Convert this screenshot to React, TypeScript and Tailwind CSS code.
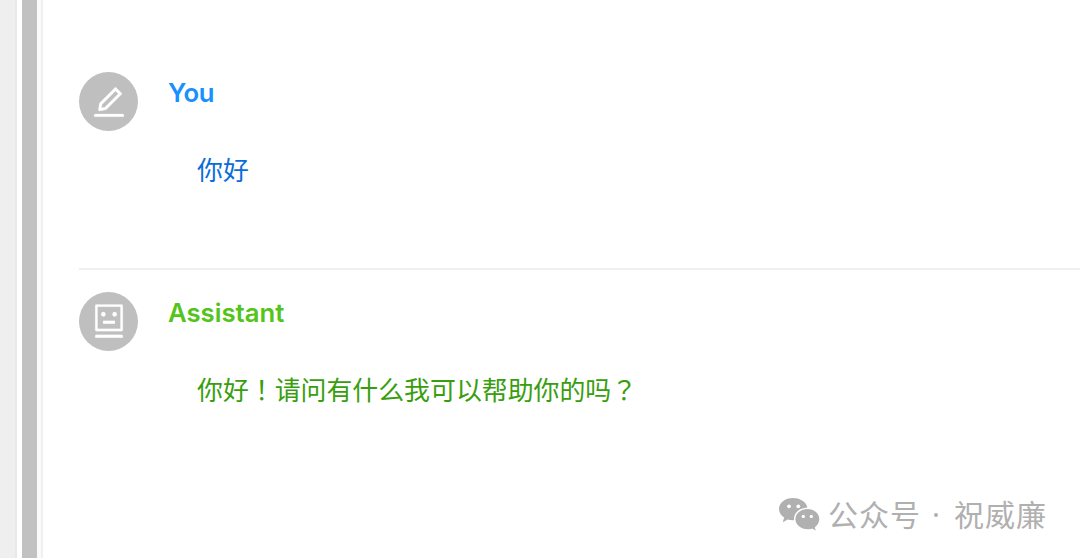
import React from "react";
import { AiOutlineEdit, AiOutlineRobot } from "react-icons/ai";

type MessageProps = {
  name: string;
  text: React.ReactNode;
  nameClass: string;
  textClass: string;
  icon: React.ReactNode;
};

function Message({ name, text, nameClass, textClass, icon }: MessageProps) {
  return (
    <section className="flex pt-[22px]">
      <div className="flex size-[59px] shrink-0 items-center justify-center rounded-full bg-[#bfbfbf] text-white">{icon}</div>
      <div className="ml-[30px]">
        <h2 className={`text-[25.7px] font-semibold leading-[42px] ${nameClass}`}>{name}</h2>
        <p className={`ml-[29px] mt-[36px] text-[25.9px] leading-[42px] ${textClass}`}>{text}</p>
      </div>
    </section>
  );
}

// Full-width punctuation centred in its em box
function Mark({ children }: { children: string }) {
  return <span className="font-['Noto_Sans_CJK_TC',sans-serif] leading-none">{children}</span>;
}

function WechatLogo() {
  return (
    <svg width="42" height="36" viewBox="0 0 42 36" className="shrink-0">
      <path fill="#b0b0b0" d="M15 .9C7.100.900 1 5.700 1 12c0 3.400 1.900 6.500 5.100 8.600L4.800 25.200l5-2.800c1.600.5 3.400.8 5.200.8C23 23.200 29.500 18.200 29.500 12S23 .9 15 .9Z" />
      <path fill="#b0b0b0" stroke="#fff" strokeWidth="1.400" d="M29.500 11.200c-7 0-12.800 4.900-12.800 10.900s5.800 10.900 12.800 10.900c1.600 0 3.100-.2 4.500-.7l4.800 2.500-1.200-4.200c2.700-2 4.400-5.100 4.400-8.500 0-6-5.500-10.900-12.500-10.900Z" />
      <g fill="#fff">
        <circle cx="11" cy="9.300" r="1.900" />
        <circle cx="20.300" cy="9.300" r="1.900" />
        <circle cx="25.300" cy="19.400" r="1.600" />
        <circle cx="33.300" cy="19.400" r="1.600" />
      </g>
    </svg>
  );
}

export default function App() {
  return (
    <div className="relative flex h-[558px] w-[1080px] overflow-hidden bg-white font-['Inter','Noto_Sans_CJK_SC',sans-serif]">
      <div className="w-[17px] shrink-0 border-r-2 border-[#e8e8e8] bg-[#efefef]" />
      <div className="ml-[5px] w-[15px] shrink-0 bg-[#c1c1c1]" />
      <div className="w-[6px] shrink-0 border-r-2 border-[#f0f0f0] bg-[#fafafa]" />
      <main className="flex flex-1 flex-col pl-[36px] pt-[50px]">
        <Message
          name="You"
          text="你好"
          nameClass="text-[#1890ff] tracking-[-0.4px]"
          textClass="text-[#096dd9]"
          icon={<AiOutlineEdit size={38} stroke="currentColor" strokeWidth={5} />}
        />
        <hr className="mt-[76px] h-[2px] border-0 bg-[#f0f0f0]" />
        <Message
          name="Assistant"
          text={<>你好<Mark>！</Mark>请问有什么我可以帮助你的吗<Mark>？</Mark></>}
          nameClass="text-[#52c41a]"
          textClass="text-[#389e0d]"
          icon={<AiOutlineRobot size={38} stroke="currentColor" strokeWidth={5} className="mb-px" />}
        />
      </main>
      <div className="absolute left-[778px] top-[497px] flex h-[36px] items-center text-[30px] leading-[36px] text-[#b0b0b0]">
        <WechatLogo />
        <span className="ml-[8px] tracking-[1px]">公众号</span>
        <span className="ml-[13px] size-[4px] rounded-full bg-[#b0b0b0]" />
        <span className="ml-[16px] tracking-[1px]">祝威廉</span>
      </div>
    </div>
  );
}
